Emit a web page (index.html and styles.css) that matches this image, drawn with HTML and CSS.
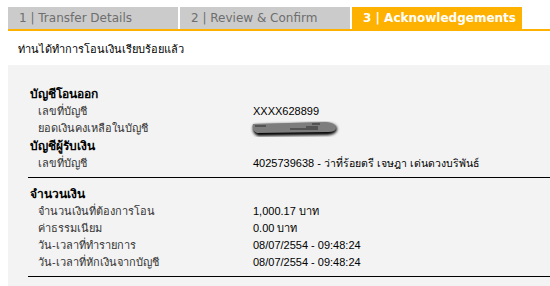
FILE: index.html
```html
<!DOCTYPE html>
<html lang="th">

<head>
    <meta charset="UTF-8">
    <title>Acknowledgements</title>
    <link rel="stylesheet" href="styles.css">
</head>

<body>
    <div class="tabs">
        <div class="tab">1 | Transfer Details</div>
        <div class="tab">2 | Review &amp; Confirm</div>
        <div class="tab active">3 | Acknowledgements</div>
    </div>

    <p class="message">ท่านได้ทำการโอนเงินเรียบร้อยแล้ว</p>

    <div class="panel">
        <div class="section first">
            <div class="head">บัญชีโอนออก</div>
            <div class="row">
                <span class="label">เลขที่บัญชี</span>
                <span class="value">XXXX628899</span>
            </div>
            <div class="row">
                <span class="label">ยอดเงินคงเหลือในบัญชี</span>
                <span class="value">
                    <svg class="smudge" width="92" height="17" viewBox="0 0 92 17">
                        <defs>
                            <filter id="soft"><feGaussianBlur stdDeviation="0.5"/></filter>
                            <filter id="shadow"><feGaussianBlur stdDeviation="1.8"/></filter>
                        </defs>
                        <path d="M4 5 L76 3 Q87 4 87 9 Q87 14 78 15 L8 16 Q1 13 4 5Z" fill="#000" filter="url(#shadow)"/>
                        <path d="M3 4 L76 2 Q86 3 86 8 Q86 12 78 12 L7 13 Q1 10 3 4Z" fill="#7d7d7d" filter="url(#soft)"/>
                        <path d="M5 6 H16 M40 9 H68 M56 7 H68 M62 4 H70" stroke="#2a2a2a" stroke-width="1.2" filter="url(#soft)"/>
                    </svg>
                </span>
            </div>
            <div class="head">บัญชีผู้รับเงิน</div>
            <div class="row">
                <span class="label">เลขที่บัญชี</span>
                <span class="value">4025739638 - <span class="name">ว่าที่ร้อยตรี เจษฎา เด่นดวงบริพันธ์</span></span>
            </div>
        </div>

        <div class="section">
            <div class="head">จำนวนเงิน</div>
            <div class="row">
                <span class="label">จำนวนเงินที่ต้องการโอน</span>
                <span class="value">1,000.17 บาท</span>
            </div>
            <div class="row">
                <span class="label">ค่าธรรมเนียม</span>
                <span class="value">0.00 บาท</span>
            </div>
            <div class="row">
                <span class="label">วัน-เวลาที่ทำรายการ</span>
                <span class="value">08/07/2554 - 09:48:24</span>
            </div>
            <div class="row">
                <span class="label">วัน-เวลาที่หักเงินจากบัญชี</span>
                <span class="value">08/07/2554 - 09:48:24</span>
            </div>
        </div>
    </div>
</body>

</html>
```

FILE: styles.css
```css
html,
body {
    height: 100%;
}

body {
    margin: 0;
    padding: 7px 0 0 8px;
    box-sizing: border-box;
    display: flex;
    flex-direction: column;
    font-family: "Liberation Sans", Arial, sans-serif;
    font-size: 11px;
    color: #000;
    background: #fff;
    overflow: hidden;
}

.tabs {
    display: flex;
    gap: 2px;
    border-bottom: 2px solid #ffb100;
}

.tab {
    width: 170px;
    height: 22px;
    box-sizing: border-box;
    padding-left: 11px;
    line-height: 22px;
    font-family: "DejaVu Sans", Verdana, sans-serif;
    font-size: 12px;
    color: #6e6e6e;
    background-color: #cbcbcb;
}

.tab.active {
    background-color: #ffb100;
    color: #fff;
    font-weight: bold;
}

.message {
    margin: 0;
    padding: 10px 0 0 10px;
    height: 24px;
    line-height: 17px;
    font-size: 11px;
}

.panel {
    flex: 1;
    background-color: #f3f3f3;
    padding: 20px 0 0 20px;
}

.section {
    border-bottom: 1px solid #000;
    padding-top: 7px;
    padding-bottom: 5px;
}

.section.first {
    padding-top: 0;
}

.head {
    font-weight: bold;
    font-size: 12px;
    line-height: 18px;
    padding-left: 2px;
}

.row {
    display: flex;
    height: 17px;
    line-height: 17px;
}

.label {
    width: 215px;
    padding-left: 10px;
    color: #333;
    font-size: 11px;
}

.value {
    display: flex;
    align-items: center;
    white-space: pre;
}

.name {
    font-size: 10.5px;
}

.smudge {
    display: block;
    margin-left: -3px;
}
```
